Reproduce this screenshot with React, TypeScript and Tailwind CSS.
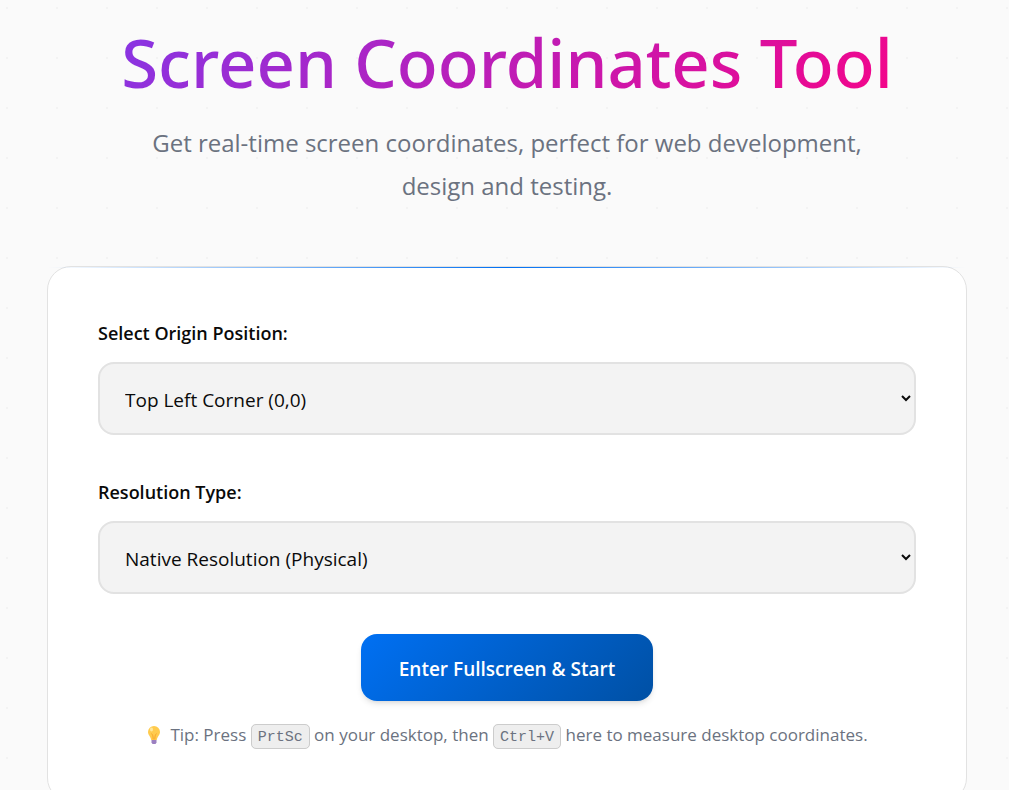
import React, { useState } from "react";

interface Option {
  value: string;
  text: string;
}

interface SelectFieldProps {
  id: string;
  label: string;
  options: Option[];
}

const origins: Option[] = [
  { value: "top-left", text: "Top Left Corner (0,0)" },
];

const resolutions: Option[] = [
  { value: "native", text: "Native Resolution (Physical)" },
];

const SelectField: React.FC<SelectFieldProps> = ({ id, label, options }) => {
  const [value, setValue] = useState(options[0].value);

  return (
    <div>
      <label htmlFor={id} className="mb-3 block text-[18px] leading-[33px] font-semibold text-[#0a0a0a]">
        {label}
      </label>
      <select
        id={id}
        value={value}
        onChange={(e) => setValue(e.target.value)}
        className="h-[73px] w-full rounded-2xl border-2 border-[#e2e2e2] bg-[#f3f3f3] pt-0.5 pl-[21px] text-[19px] text-[#0a0a0a]"
      >
        {options.map((o) => (
          <option key={o.value} value={o.value}>
            {o.text}
          </option>
        ))}
      </select>
    </div>
  );
};

const Kbd: React.FC<{ children: React.ReactNode }> = ({ children }) => (
  <kbd className="rounded-[5px] border border-[#ccc] bg-[#eee] px-1.5 pt-1 pb-0.5 font-['Liberation_Mono',monospace] text-[15px]">
    {children}
  </kbd>
);

const Bulb = () => (
  <svg viewBox="0 0 16 20" className="mr-2 inline-block h-5 w-4 align-[-4px]" aria-hidden="true">
    <path d="M8 1a6 6 0 0 0-6 6c0 3.200 2.700 4.400 3.200 8h5.600C11.300 11.400 14 10.200 14 7a6 6 0 0 0-6-6z" fill="#ffcb4d" />
    <path d="M5.500 8.500c.8 1.200 1.500 1.200 1.700 6M10.500 8.500c-.8 1.200-1.500 1.200-1.700 6" fill="none" stroke="#f59b23" strokeWidth="0.800" />
    <ellipse cx="5.500" cy="4.500" rx="1.500" ry="2" fill="#ffe79a" />
    <path d="M5.500 15h5v2.500L9.500 19h-3l-1-1.500z" fill="#9b7fc0" />
  </svg>
);

export default function App() {
  return (
    <div className="min-h-screen bg-[#fafafa] bg-[radial-gradient(circle_at_7px_8px,#f3f3f3_1px,transparent_1px)] bg-[length:50px_50px] pt-[18px] pr-[42px] pl-[47px] font-['Open_Sans',sans-serif]">
      <header className="text-center">
        <h1 className="bg-linear-135/srgb from-[#7c3aed] to-[#ff0080] bg-clip-text font-['Noto_Sans',sans-serif] text-[67px] leading-[88px] font-medium text-transparent">
          Screen Coordinates Tool
        </h1>
        <p className="mx-auto mt-[15px] max-w-[720px] text-[24px] leading-[43px] text-[#6b7280]">
          Get real-time screen coordinates, perfect for web development, design and testing.
        </p>
      </header>

      <main className="relative mt-[59px] rounded-3xl border border-[#e2e2e2] bg-white px-[50px] pt-[50px] pb-12">
        <div className="absolute inset-x-0 top-0 h-px bg-linear-to-r/srgb from-transparent via-[#0070f3] to-transparent" />
        <div className="mb-10 flex flex-col gap-[41px]">
          <SelectField id="origin" label="Select Origin Position:" options={origins} />
          <SelectField id="resolution" label="Resolution Type:" options={resolutions} />
        </div>
        <div className="text-center">
          <button
            type="button"
            className="h-[67px] rounded-2xl bg-linear-135/srgb from-[#0070f3] to-[#0050a4] px-[38px] pt-1 text-[19px] font-semibold text-white shadow-md"
          >
            Enter Fullscreen &amp; Start
          </button>
          <p className="mt-[19px] text-[17px] leading-[30px] text-[#6b7280]">
            <Bulb />
            Tip: Press <Kbd>PrtSc</Kbd> on your desktop, then <Kbd>Ctrl+V</Kbd> here to measure desktop coordinates.
          </p>
        </div>
      </main>
    </div>
  );
}
